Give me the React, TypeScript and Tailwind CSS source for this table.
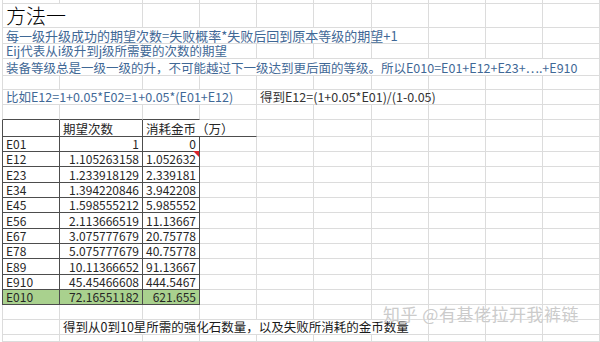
import React from "react";

type Cell = {
  span?: number;
  text?: string;
  right?: boolean;
  table?: boolean;
  topEdge?: boolean;
  green?: boolean;
  comment?: boolean;
  cls?: string;
};

const blue = "text-[#3f6896] text-[12.5px]";

const data: [string, string, string][] = [
  ["E01", "1", "0"],
  ["E12", "1.105263158", "1.052632"],
  ["E23", "1.233918129", "2.339181"],
  ["E34", "1.394220846", "3.942208"],
  ["E45", "1.598555212", "5.985552"],
  ["E56", "2.113666519", "11.13667"],
  ["E67", "3.075777679", "20.75778"],
  ["E78", "5.075777679", "40.75778"],
  ["E89", "10.11366652", "91.13667"],
  ["E910", "45.45466608", "444.5467"],
  ["E010", "72.16551182", "621.655"],
];

function blanks(n: number): Cell[] {
  return Array.from({ length: n }, () => ({}));
}

const rows: Cell[][] = [
  blanks(10),
  [{ span: 2, text: "方法一", cls: "text-[20px] leading-[22px] font-light text-black" }, ...blanks(8)],
  [
    {
      span: 6,
      text: "每一级升级成功的期望次数=失败概率*失败后回到原本等级的期望+1",
      cls: "text-[#3f6896] text-[13px]",
    },
    ...blanks(4),
  ],
  [{ span: 2, text: "Eij代表从i级升到j级所需要的次数的期望", cls: blue }, ...blanks(8)],
  [
    {
      span: 10,
      text: "装备等级总是一级一级的升，不可能越过下一级达到更后面的等级。所以E010=E01+E12+E23+⋯.+E910",
      cls: blue,
    },
  ],
  blanks(10),
  [
    { span: 4, text: "比如E12=1+0.05*E02=1+0.05*(E01+E12)", cls: blue },
    { span: 3, text: "得到E12=(1+0.05*E01)/(1-0.05)", cls: "text-[#333] text-[12.5px]" },
    ...blanks(3),
  ],
  [{ topEdge: true }, { topEdge: true }, { topEdge: true }, ...blanks(7)],
  [
    { table: true },
    { table: true, text: "期望次数", cls: "text-[#262626] text-[12.5px]" },
    { span: 2, table: true, text: "消耗金币（万）", cls: "border-r-[#dcdcdc] text-[#262626] text-[12.5px]" },
    ...blanks(6),
  ],
];

const bottomRows: Cell[][] = [
  blanks(10),
  [
    {},
    {
      span: 6,
      text: "得到从0到10星所需的强化石数量，以及失败所消耗的金币数量",
      cls: "text-[#1a1a1a] text-[12.5px]",
    },
    ...blanks(3),
  ],
  blanks(10),
];

function Sheet() {
  const tableRows: Cell[][] = data.map(([a, b, c], i) => {
    const green = i === data.length - 1;
    const num = "text-[#262626] text-[12px]";
    return [
      { table: true, text: a, green, cls: num },
      { table: true, text: b, right: true, green, cls: num },
      { table: true, text: c, right: true, green, comment: i === 1, cls: num },
      ...blanks(7),
    ];
  });
  const all = [...rows, ...tableRows, ...bottomRows];

  return (
    <div className="grid grid-cols-[58px_83px_57px_57px_57px_58px_57px_57px_57px_57px] grid-rows-[4px_24px_16px_15px_17px_14px_15px_15px_17px_15px_15px_16px_15px_15px_16px_15px_15px_16px_15px_15px_15px_15px_7px]">
      {all.map((row, r) => {
        let col = 0;
        return row.map((c, k) => {
          const first = col === 0;
          col += c.span ?? 1;
          const border = c.table ? "border-[#4d4d4d]" : "border-[#dcdcdc]";
          const bottom = c.topEdge ? "border-b-[#4d4d4d]" : "";
          return (
            <div
              key={`${r}-${k}`}
              style={{ gridColumn: `span ${c.span ?? 1}` }}
              className={[
                "relative flex items-end whitespace-nowrap border-r border-b px-[3px] leading-[14px]",
                first ? "border-l" : "",
                border,
                bottom,
                c.right ? "justify-end" : "justify-start",
                c.green ? "bg-[#a9d18e]" : "",
                c.cls ?? "",
              ].join(" ")}
            >
              {c.text}
              {c.comment && (
                <span className="absolute -top-px right-0 w-0 h-0 border-t-[6px] border-l-[6px] border-t-[#d9242a] border-l-transparent" />
              )}
            </div>
          );
        });
      })}
    </div>
  );
}

export default function App() {
  return (
    <div
      className="relative w-[600px] h-[342px] overflow-hidden bg-white pl-[2px]"
      style={{ fontFamily: '"Noto Sans CJK SC", "Noto Sans", sans-serif' }}
    >
      <Sheet />
      <div className="absolute left-[383px] top-[304px] text-[17px] leading-[20px] tracking-[0.5px] text-[#cbcbcb] whitespace-nowrap [text-shadow:0_0_2px_#fff]">
        知乎 @有基佬拉开我裤链
      </div>
    </div>
  );
}
